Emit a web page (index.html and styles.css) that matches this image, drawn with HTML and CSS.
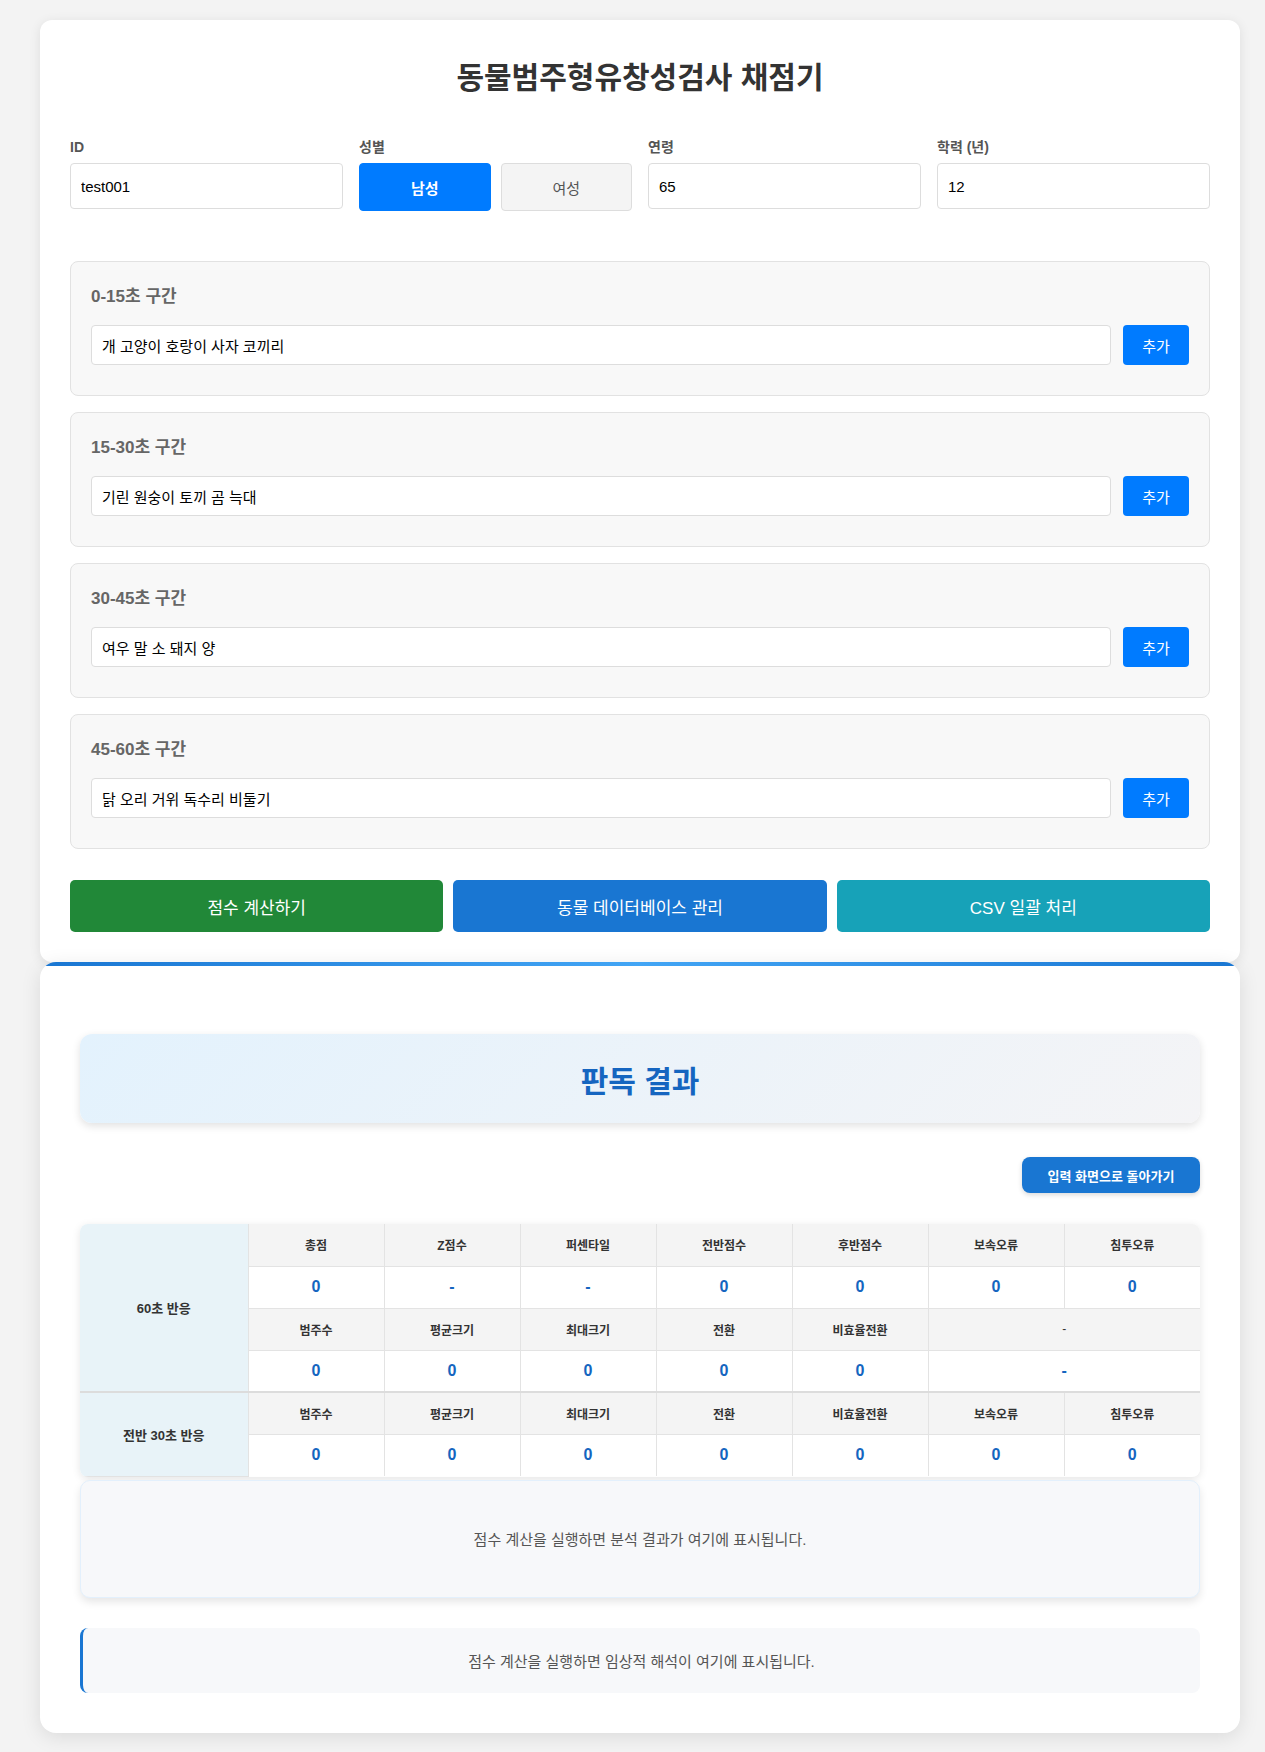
FILE: index.html
```html
<!DOCTYPE html>
<html lang="ko">
<head>
<meta charset="utf-8">
<title>동물범주형유창성검사 채점기</title>
<link rel="stylesheet" href="styles.css">
</head>
<body>
<div class="container">
  <div class="card input-card">
    <h1 class="title">동물범주형유창성검사 채점기</h1>
    <div class="form-grid">
      <div class="field">
        <label class="label">ID</label>
        <input class="text-input" type="text" value="test001">
      </div>
      <div class="field">
        <label class="label">성별</label>
        <div class="gender">
          <button class="gender-btn active">남성</button>
          <button class="gender-btn">여성</button>
        </div>
      </div>
      <div class="field">
        <label class="label">연령</label>
        <input class="text-input" type="text" value="65">
      </div>
      <div class="field">
        <label class="label">학력 (년)</label>
        <input class="text-input" type="text" value="12">
      </div>
    </div>

    <div class="segments">
      <div class="segment">
        <h3 class="segment-title">0-15초 구간</h3>
        <div class="segment-row">
          <input class="segment-input" type="text" value="개 고양이 호랑이 사자 코끼리">
          <button class="add-btn">추가</button>
        </div>
      </div>
      <div class="segment">
        <h3 class="segment-title">15-30초 구간</h3>
        <div class="segment-row">
          <input class="segment-input" type="text" value="기린 원숭이 토끼 곰 늑대">
          <button class="add-btn">추가</button>
        </div>
      </div>
      <div class="segment">
        <h3 class="segment-title">30-45초 구간</h3>
        <div class="segment-row">
          <input class="segment-input" type="text" value="여우 말 소 돼지 양">
          <button class="add-btn">추가</button>
        </div>
      </div>
      <div class="segment">
        <h3 class="segment-title">45-60초 구간</h3>
        <div class="segment-row">
          <input class="segment-input" type="text" value="닭 오리 거위 독수리 비둘기">
          <button class="add-btn">추가</button>
        </div>
      </div>
    </div>

    <div class="actions">
      <button class="action-btn green">점수 계산하기</button>
      <button class="action-btn blue">동물 데이터베이스 관리</button>
      <button class="action-btn teal">CSV 일괄 처리</button>
    </div>
  </div>

  <div class="card result-card">
    <div class="result-header">
      <h2 class="result-title">판독 결과</h2>
    </div>
    <div class="back-row">
      <button class="back-btn">입력 화면으로 돌아가기</button>
    </div>

    <div class="table-wrap">
      <table class="score-table">
        <colgroup>
          <col class="col-label">
          <col><col><col><col><col><col><col>
        </colgroup>
        <tbody>
          <tr class="head">
            <td class="row-label" rowspan="4">60초 반응</td>
            <td>총점</td><td>Z점수</td><td>퍼센타일</td><td>전반점수</td><td>후반점수</td><td>보속오류</td><td>침투오류</td>
          </tr>
          <tr class="val">
            <td>0</td><td>-</td><td>-</td><td>0</td><td>0</td><td>0</td><td>0</td>
          </tr>
          <tr class="head">
            <td>범주수</td><td>평균크기</td><td>최대크기</td><td>전환</td><td>비효율전환</td><td colspan="2">-</td>
          </tr>
          <tr class="val">
            <td>0</td><td>0</td><td>0</td><td>0</td><td>0</td><td colspan="2">-</td>
          </tr>
          <tr class="head group-start">
            <td class="row-label" rowspan="2">전반 30초 반응</td>
            <td>범주수</td><td>평균크기</td><td>최대크기</td><td>전환</td><td>비효율전환</td><td>보속오류</td><td>침투오류</td>
          </tr>
          <tr class="val">
            <td>0</td><td>0</td><td>0</td><td>0</td><td>0</td><td>0</td><td>0</td>
          </tr>
        </tbody>
      </table>
    </div>

    <div class="analysis-box">
      <p class="placeholder">점수 계산을 실행하면 분석 결과가 여기에 표시됩니다.</p>
    </div>

    <div class="interpret-box">
      <p class="placeholder">점수 계산을 실행하면 임상적 해석이 여기에 표시됩니다.</p>
    </div>
  </div>
</div>
</body>
</html>
```

FILE: styles.css
```css
* { box-sizing: border-box; }

body {
  margin: 0;
  padding: 20px 25px 20px 40px;
  background: #f3f3f3;
  font-family: "Liberation Sans", "Noto Sans CJK KR", sans-serif;
  color: #333;
}

.container {
  width: 1200px;
}

.card {
  background: #fff;
  border-radius: 12px;
  box-shadow: 0 2px 12px rgba(0, 0, 0, 0.09);
}

.input-card {
  padding: 30px;
}

.title {
  margin: 10px 0 0;
  font-size: 30px;
  line-height: 36px;
  font-weight: 700;
  text-align: center;
  color: #333;
}

.form-grid {
  margin-top: 41px;
  display: grid;
  grid-template-columns: repeat(4, 1fr);
  gap: 16px;
  align-items: start;
}

.field {
  display: flex;
  flex-direction: column;
}

.label {
  font-size: 14px;
  line-height: 20px;
  font-weight: 700;
  color: #555;
  margin-bottom: 6px;
}

.text-input {
  height: 46px;
  border: 1px solid #ddd;
  border-radius: 4px;
  padding: 0 10px;
  font-family: inherit;
  font-size: 15px;
  color: #000;
  background: #fff;
}

.gender {
  display: flex;
  gap: 10px;
}

.gender-btn {
  flex: 1;
  height: 48px;
  border-radius: 4px;
  border: 1px solid #ddd;
  background: #f4f4f4;
  color: #555;
  font-family: inherit;
  font-size: 15px;
}

.gender-btn.active {
  background: #007bff;
  border-color: #007bff;
  color: #fff;
  font-weight: 700;
}

.segments {
  margin-top: 50px;
  display: flex;
  flex-direction: column;
  gap: 16px;
}

.segment {
  background: #f8f8f8;
  border: 1px solid #e2e2e2;
  border-radius: 8px;
  padding: 23px 20px 30px;
}

.segment-title {
  margin: 0 0 16px;
  font-size: 17px;
  line-height: 24px;
  font-weight: 700;
  color: #666;
}

.segment-row {
  display: flex;
  gap: 12px;
}

.segment-input {
  flex: 1;
  height: 40px;
  border: 1px solid #ddd;
  border-radius: 4px;
  padding: 0 10px;
  font-family: inherit;
  font-size: 15px;
  color: #000;
  background: #fff;
}

.add-btn {
  width: 66px;
  height: 40px;
  border: none;
  border-radius: 4px;
  background: #007bff;
  color: #fff;
  font-family: inherit;
  font-size: 15px;
}

.actions {
  margin-top: 31px;
  display: flex;
  gap: 10px;
}

.action-btn {
  flex: 1;
  height: 52px;
  border: none;
  border-radius: 5px;
  color: #fff;
  font-family: inherit;
  font-size: 17px;
}

.action-btn.green { background: #218838; }
.action-btn.blue { background: #1976d2; }
.action-btn.teal { background: #17a2b8; }

.result-card {
  position: relative;
  overflow: hidden;
  border-radius: 16px;
  padding: 72px 40px 40px;
  box-shadow: 0 4px 20px rgba(0, 0, 0, 0.1);
}

.result-card::before {
  content: "";
  position: absolute;
  top: 0;
  left: 0;
  right: 0;
  height: 4px;
  background: linear-gradient(90deg, #1976d2, #42a5f5, #1976d2);
}

.result-header {
  height: 89px;
  border-radius: 12px;
  background: linear-gradient(135deg, #e3f2fd, #f4f4f6);
  box-shadow: 0 3px 8px rgba(0, 0, 0, 0.12);
  display: flex;
  align-items: center;
  justify-content: center;
}

.result-title {
  margin: 0;
  font-size: 30px;
  font-weight: 700;
  color: #1565c0;
}

.back-row {
  margin-top: 34px;
  display: flex;
  justify-content: flex-end;
}

.back-btn {
  width: 178px;
  height: 36px;
  border: none;
  border-radius: 8px;
  background: #1976d2;
  color: #fff;
  font-family: inherit;
  font-size: 13px;
  font-weight: 700;
  box-shadow: 0 2px 5px rgba(0, 0, 0, 0.15);
}

.table-wrap {
  margin-top: 31px;
  border-radius: 8px;
  overflow: hidden;
  box-shadow: 0 2px 8px rgba(0, 0, 0, 0.1);
}

.score-table {
  width: 100%;
  border-collapse: collapse;
  table-layout: fixed;
}

.col-label { width: 168px; }

.score-table td {
  border: 1px solid #e3e3e3;
  text-align: center;
  padding: 0;
}

.score-table tr:first-child td { border-top: none; }
.score-table tr:last-child td { border-bottom: none; }
.score-table td:last-child { border-right: none; }
.score-table td:first-child { border-left: none; }

.score-table .head td {
  height: 42px;
  background: #f4f4f4;
  font-size: 12px;
  font-weight: 600;
  color: #333;
}

.score-table .val td {
  height: 42px;
  background: #fff;
  font-size: 16px;
  font-weight: 700;
  color: #1565c0;
}

.score-table td.row-label {
  background: #e8f3f8;
  font-size: 13px;
  font-weight: 700;
  color: #333;
}

.score-table .head td[colspan] {
  font-weight: 400;
}

.score-table .group-start td {
  border-top: 2px solid #dcdcdc;
}

.analysis-box {
  margin-top: 3px;
  height: 118px;
  background: #f7f8fa;
  border: 1px solid #e3f0fc;
  border-radius: 10px;
  box-shadow: 0 4px 8px rgba(0, 0, 0, 0.1);
  display: flex;
  align-items: center;
  justify-content: center;
}

.interpret-box {
  margin-top: 30px;
  height: 65px;
  background: #f7f8fa;
  border-left: 3px solid #1976d2;
  border-radius: 8px;
  display: flex;
  align-items: center;
  justify-content: center;
}

.placeholder {
  margin: 0;
  font-size: 15px;
  color: #555;
}
```
